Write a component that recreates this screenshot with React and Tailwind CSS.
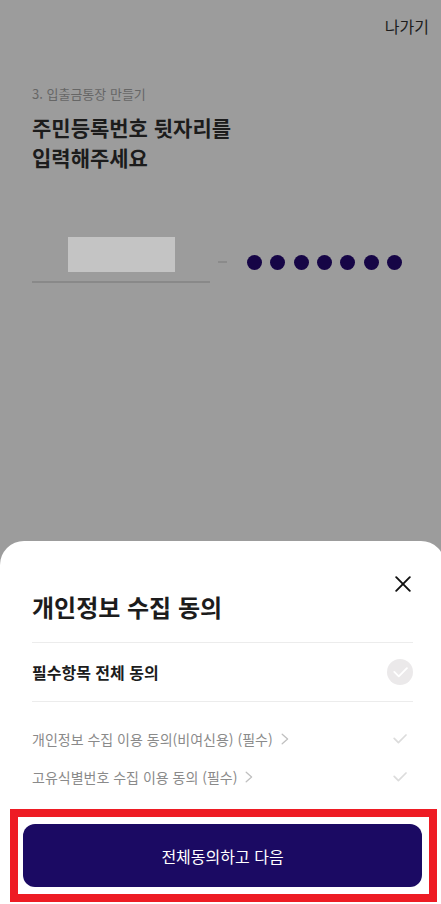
import { useState } from 'react'

const terms = [
  { id: 'privacy', label: '개인정보 수집 이용 동의(비여신용) (필수)' },
  { id: 'identity', label: '고유식별번호 수집 이용 동의 (필수)' },
]

function CheckMark({ className }) {
  return (
    <svg viewBox="0 0 14 10" fill="none" stroke="currentColor" strokeWidth="1.7" strokeLinecap="round" strokeLinejoin="round" className={className}>
      <path d="M1.2 4.4 L5.4 8.6 L13 1" />
    </svg>
  )
}

function ResidentNumber() {
  const [back, setBack] = useState('0000000')

  return (
    <div className="flex mt-[65px]">
      <div className="w-[178px] h-[46px] border-b-2 border-[#898989]">
        <input
          type="text"
          aria-label="주민등록번호 앞자리"
          className="block mx-auto w-[107px] h-[35px] bg-[#c4c4c4] text-center outline-none"
        />
      </div>
      <span className="w-[9px] h-[2px] mt-6 ml-2 bg-[#8b8b8b]" />
      <div className="relative flex justify-between w-[155px] h-[15px] mt-[18px] ml-5">
        {[...back].map((_, i) => (
          <span key={i} className="size-[15px] rounded-full bg-[#160546]" />
        ))}
        <input
          type="password"
          maxLength={7}
          value={back}
          onChange={(e) => setBack(e.target.value)}
          aria-label="주민등록번호 뒷자리"
          className="absolute inset-0 w-full opacity-0"
        />
      </div>
    </div>
  )
}

function TermRow({ id, label, checked, onChange }) {
  return (
    <li className="flex items-center justify-between h-[38px]">
      <a href={`#${id}`} className="flex items-center gap-2 text-[#8a8a8a]">
        {label}
        <svg viewBox="0 0 8 12" fill="none" stroke="#c0c0c0" strokeWidth="1.3" strokeLinecap="round" strokeLinejoin="round" className="w-2 h-3">
          <path d="M1.2 1.2 L6.6 6 L1.2 10.8" />
        </svg>
      </a>
      <label className="flex justify-center w-[26px] cursor-pointer">
        <input type="checkbox" checked={checked} onChange={onChange} aria-label={label} className="peer sr-only" />
        <CheckMark className="w-[14px] h-[10px] text-[#dcdcdc] peer-checked:text-[#1b0a63]" />
      </label>
    </li>
  )
}

function ConsentSheet() {
  const [agreed, setAgreed] = useState({})
  const all = terms.every((t) => agreed[t.id])

  const setAll = (value) => setAgreed(Object.fromEntries(terms.map((t) => [t.id, value])))

  return (
    <section role="dialog" aria-labelledby="sheet-title" className="-mr-1 bg-white rounded-t-3xl pt-[35px] pb-[2px]">
      <div className="px-8">
        <div className="flex justify-end pr-[2px]">
          <button type="button" aria-label="닫기">
            <svg viewBox="0 0 16 16" fill="none" stroke="#111" strokeWidth="1.9" strokeLinecap="round" className="size-4">
              <path d="M1.2 1.2 L14.8 14.8 M14.8 1.2 L1.2 14.8" />
            </svg>
          </button>
        </div>
        <h2 id="sheet-title" className="text-[24px] leading-[30px] font-bold text-[#1c1c1c] pb-5 border-b border-[#ececec]">
          개인정보 수집 동의
        </h2>
        <label className="flex items-center justify-between h-[59px] border-b border-[#ececec] cursor-pointer">
          <span className="text-[16px] font-bold text-[#1c1c1c]">필수항목 전체 동의</span>
          <input type="checkbox" checked={all} onChange={(e) => setAll(e.target.checked)} className="peer sr-only" />
          <span className="flex items-center justify-center size-[26px] rounded-full bg-[#ebe9ea] text-white peer-checked:bg-[#1b0a63]">
            <CheckMark className="w-[15px] h-[11px]" />
          </span>
        </label>
        <ul className="pt-[18px] text-[14px]">
          {terms.map((t) => (
            <TermRow
              key={t.id}
              {...t}
              checked={!!agreed[t.id]}
              onChange={(e) => setAgreed({ ...agreed, [t.id]: e.target.checked })}
            />
          ))}
        </ul>
      </div>
      <div className="mt-[13px] ml-[10px] mr-2 border-8 border-[#ee1c24] py-[7px] pl-[5px] pr-[7px]">
        <button
          type="button"
          onClick={() => setAll(true)}
          className="block w-full h-[63px] rounded-xl bg-[#1b0a63] text-[16px] text-white"
        >
          전체동의하고 다음
        </button>
      </div>
    </section>
  )
}

export default function App() {
  return (
    <div lang="ko" className="flex flex-col min-h-screen overflow-hidden bg-[#9c9c9c] font-['Noto_Sans_CJK_KR',sans-serif]">
      <header className="flex justify-end px-3 pt-[14px]">
        <button type="button" className="text-[16px] leading-6 text-[#1c1c1c]">나가기</button>
      </header>
      <main className="px-8 pt-[46px] pb-8">
        <p className="text-[13px] leading-5 text-[#666]">3. 입출금통장 만들기</p>
        <h1 className="mt-2 text-[21px] leading-[30px] font-bold text-[#1c1c1c]">
          주민등록번호 뒷자리를
          <br />
          입력해주세요
        </h1>
        <ResidentNumber />
      </main>
      <div className="mt-auto">
        <ConsentSheet />
      </div>
    </div>
  )
}
